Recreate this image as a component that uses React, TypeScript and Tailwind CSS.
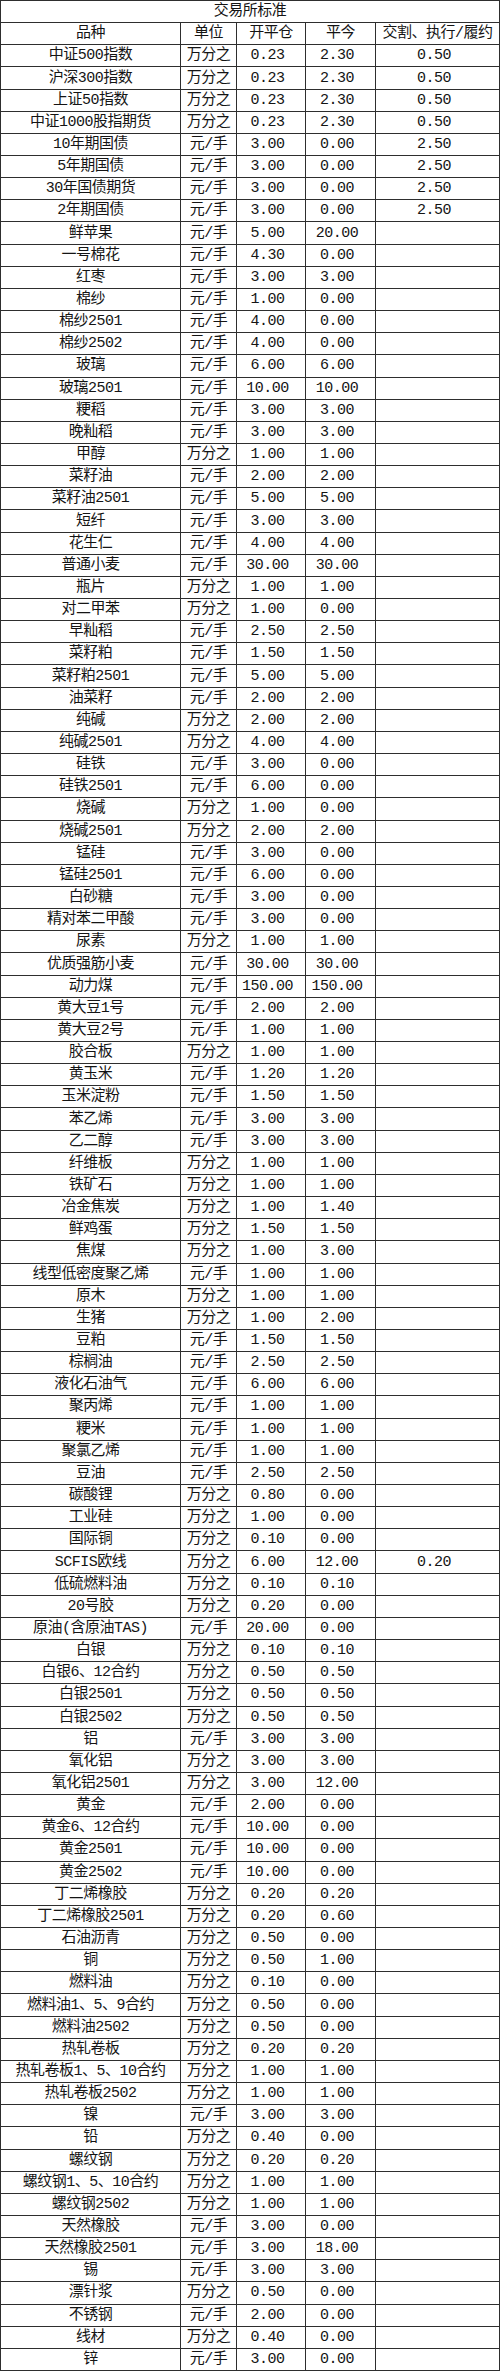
import React from 'react';

type Row = [string, string, string, string, string?];

const rows: Row[] = [
  ['中证500指数', '万分之', '0.23', '2.30', '0.50'],
  ['沪深300指数', '万分之', '0.23', '2.30', '0.50'],
  ['上证50指数', '万分之', '0.23', '2.30', '0.50'],
  ['中证1000股指期货', '万分之', '0.23', '2.30', '0.50'],
  ['10年期国债', '元/手', '3.00', '0.00', '2.50'],
  ['5年期国债', '元/手', '3.00', '0.00', '2.50'],
  ['30年国债期货', '元/手', '3.00', '0.00', '2.50'],
  ['2年期国债', '元/手', '3.00', '0.00', '2.50'],
  ['鲜苹果', '元/手', '5.00', '20.00'],
  ['一号棉花', '元/手', '4.30', '0.00'],
  ['红枣', '元/手', '3.00', '3.00'],
  ['棉纱', '元/手', '1.00', '0.00'],
  ['棉纱2501', '元/手', '4.00', '0.00'],
  ['棉纱2502', '元/手', '4.00', '0.00'],
  ['玻璃', '元/手', '6.00', '6.00'],
  ['玻璃2501', '元/手', '10.00', '10.00'],
  ['粳稻', '元/手', '3.00', '3.00'],
  ['晚籼稻', '元/手', '3.00', '3.00'],
  ['甲醇', '万分之', '1.00', '1.00'],
  ['菜籽油', '元/手', '2.00', '2.00'],
  ['菜籽油2501', '元/手', '5.00', '5.00'],
  ['短纤', '元/手', '3.00', '3.00'],
  ['花生仁', '元/手', '4.00', '4.00'],
  ['普通小麦', '元/手', '30.00', '30.00'],
  ['瓶片', '万分之', '1.00', '1.00'],
  ['对二甲苯', '万分之', '1.00', '0.00'],
  ['早籼稻', '元/手', '2.50', '2.50'],
  ['菜籽粕', '元/手', '1.50', '1.50'],
  ['菜籽粕2501', '元/手', '5.00', '5.00'],
  ['油菜籽', '元/手', '2.00', '2.00'],
  ['纯碱', '万分之', '2.00', '2.00'],
  ['纯碱2501', '万分之', '4.00', '4.00'],
  ['硅铁', '元/手', '3.00', '0.00'],
  ['硅铁2501', '元/手', '6.00', '0.00'],
  ['烧碱', '万分之', '1.00', '0.00'],
  ['烧碱2501', '万分之', '2.00', '2.00'],
  ['锰硅', '元/手', '3.00', '0.00'],
  ['锰硅2501', '元/手', '6.00', '0.00'],
  ['白砂糖', '元/手', '3.00', '0.00'],
  ['精对苯二甲酸', '元/手', '3.00', '0.00'],
  ['尿素', '万分之', '1.00', '1.00'],
  ['优质强筋小麦', '元/手', '30.00', '30.00'],
  ['动力煤', '元/手', '150.00', '150.00'],
  ['黄大豆1号', '元/手', '2.00', '2.00'],
  ['黄大豆2号', '元/手', '1.00', '1.00'],
  ['胶合板', '万分之', '1.00', '1.00'],
  ['黄玉米', '元/手', '1.20', '1.20'],
  ['玉米淀粉', '元/手', '1.50', '1.50'],
  ['苯乙烯', '元/手', '3.00', '3.00'],
  ['乙二醇', '元/手', '3.00', '3.00'],
  ['纤维板', '万分之', '1.00', '1.00'],
  ['铁矿石', '万分之', '1.00', '1.00'],
  ['冶金焦炭', '万分之', '1.00', '1.40'],
  ['鲜鸡蛋', '万分之', '1.50', '1.50'],
  ['焦煤', '万分之', '1.00', '3.00'],
  ['线型低密度聚乙烯', '元/手', '1.00', '1.00'],
  ['原木', '万分之', '1.00', '1.00'],
  ['生猪', '万分之', '1.00', '2.00'],
  ['豆粕', '元/手', '1.50', '1.50'],
  ['棕榈油', '元/手', '2.50', '2.50'],
  ['液化石油气', '元/手', '6.00', '6.00'],
  ['聚丙烯', '元/手', '1.00', '1.00'],
  ['粳米', '元/手', '1.00', '1.00'],
  ['聚氯乙烯', '元/手', '1.00', '1.00'],
  ['豆油', '元/手', '2.50', '2.50'],
  ['碳酸锂', '万分之', '0.80', '0.00'],
  ['工业硅', '万分之', '1.00', '0.00'],
  ['国际铜', '万分之', '0.10', '0.00'],
  ['SCFIS欧线', '万分之', '6.00', '12.00', '0.20'],
  ['低硫燃料油', '万分之', '0.10', '0.10'],
  ['20号胶', '万分之', '0.20', '0.00'],
  ['原油(含原油TAS)', '元/手', '20.00', '0.00'],
  ['白银', '万分之', '0.10', '0.10'],
  ['白银6、12合约', '万分之', '0.50', '0.50'],
  ['白银2501', '万分之', '0.50', '0.50'],
  ['白银2502', '万分之', '0.50', '0.50'],
  ['铝', '元/手', '3.00', '3.00'],
  ['氧化铝', '万分之', '3.00', '3.00'],
  ['氧化铝2501', '万分之', '3.00', '12.00'],
  ['黄金', '元/手', '2.00', '0.00'],
  ['黄金6、12合约', '元/手', '10.00', '0.00'],
  ['黄金2501', '元/手', '10.00', '0.00'],
  ['黄金2502', '元/手', '10.00', '0.00'],
  ['丁二烯橡胶', '万分之', '0.20', '0.20'],
  ['丁二烯橡胶2501', '万分之', '0.20', '0.60'],
  ['石油沥青', '万分之', '0.50', '0.00'],
  ['铜', '万分之', '0.50', '1.00'],
  ['燃料油', '万分之', '0.10', '0.00'],
  ['燃料油1、5、9合约', '万分之', '0.50', '0.00'],
  ['燃料油2502', '万分之', '0.50', '0.00'],
  ['热轧卷板', '万分之', '0.20', '0.20'],
  ['热轧卷板1、5、10合约', '万分之', '1.00', '1.00'],
  ['热轧卷板2502', '万分之', '1.00', '1.00'],
  ['镍', '元/手', '3.00', '3.00'],
  ['铅', '万分之', '0.40', '0.00'],
  ['螺纹钢', '万分之', '0.20', '0.20'],
  ['螺纹钢1、5、10合约', '万分之', '1.00', '1.00'],
  ['螺纹钢2502', '万分之', '1.00', '1.00'],
  ['天然橡胶', '元/手', '3.00', '0.00'],
  ['天然橡胶2501', '元/手', '3.00', '18.00'],
  ['锡', '元/手', '3.00', '3.00'],
  ['漂针浆', '万分之', '0.50', '0.00'],
  ['不锈钢', '元/手', '2.00', '0.00'],
  ['线材', '万分之', '0.40', '0.00'],
  ['锌', '元/手', '3.00', '0.00'],
];

const cell = 'flex items-center justify-center whitespace-nowrap border-r border-b border-[#2e2e2e]';
const num = cell + ' pr-[7px]';

export default function App() {
  return (
    <div className="bg-white">
      <div className="grid w-[500px] h-[2371px] grid-cols-[180px_56px_69px_70px_124px] grid-rows-[repeat(107,minmax(0,1fr))] border-l border-t border-[#2e2e2e] font-['Liberation_Mono','Noto_Sans_CJK_SC',monospace] text-[15px] leading-none tracking-[-0.5px] text-[#141414]">
        <div className={cell + ' col-span-5'}>交易所标准</div>
        <div className={cell}>品种</div>
        <div className={cell}>单位</div>
        <div className={cell}>开平仓</div>
        <div className={cell}>平今</div>
        <div className={cell}>交割、执行/履约</div>
        {rows.map((r, i) => (
          <React.Fragment key={i}>
            <div className={cell}>{r[0]}</div>
            <div className={cell}>{r[1]}</div>
            <div className={num}>{r[2]}</div>
            <div className={num}>{r[3]}</div>
            <div className={num}>{r[4] ?? ''}</div>
          </React.Fragment>
        ))}
      </div>
    </div>
  );
}
